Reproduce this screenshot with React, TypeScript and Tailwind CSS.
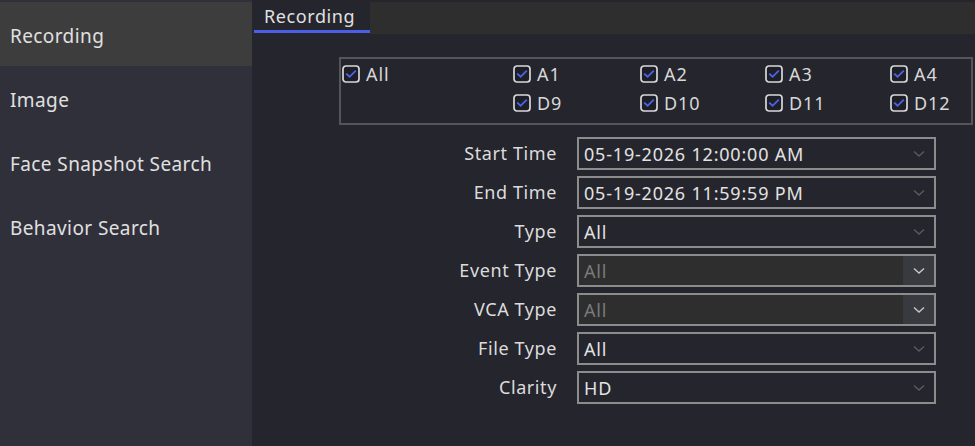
import React from "react";

const font = { fontFamily: '"Noto Sans", "Open Sans", sans-serif' };

function Check({ label }: { label: string }) {
  return (
    <div className="flex items-center gap-[6px] h-[18px] text-[18px] tracking-[0.9px] text-[#d8d8d8] leading-none">
      <svg width="18" height="18" viewBox="0 0 18 18">
        <rect x="1" y="1" width="16" height="16" rx="3" fill="#1e1e26" stroke="#d9d9d9" strokeWidth="1.7" />
        <path d="M4.2 8.6 L7.6 11.8 L13.8 5.6" fill="none" stroke="#4a63e8" strokeWidth="1.9" />
      </svg>
      <span>{label}</span>
    </div>
  );
}

function Chevron({ color }: { color: string }) {
  return (
    <svg width="12" height="8" viewBox="0 0 12 8">
      <path d="M1 1.5 L6 6 L11 1.5" fill="none" stroke={color} strokeWidth="1.4" />
    </svg>
  );
}

function Field({ label, value, disabled }: { label: string; value: string; disabled?: boolean }) {
  return (
    <div className="flex items-center h-[33px]">
      <div className="w-[325px] pr-[20px] text-right text-[18px] tracking-[0.6px] text-[#dcdcdc]">{label}</div>
      <div
        className={`flex items-center w-[359px] h-[33px] border-2 border-[#8c8c8c] ${
          disabled ? "bg-[#2e2e2e]" : "bg-[#25252d]"
        }`}
      >
        <div
          className={`flex-1 pl-[5px] pt-[1px] text-[18px] tracking-[0.8px] ${
            disabled ? "text-[#7a7a7a]" : "text-[#e2e2e2]"
          }`}
        >
          {value}
        </div>
        <div
          className={`flex items-center justify-center w-[31px] h-full ${disabled ? "bg-[#393940]" : ""}`}
        >
          <Chevron color={disabled ? "#c8c8c8" : "#5a5a62"} />
        </div>
      </div>
    </div>
  );
}

function NavItem({ label, active }: { label: string; active?: boolean }) {
  return (
    <div
      className={`h-[64px] flex items-center pl-[10px] pt-[4px] text-[19px] tracking-[0.4px] text-[#e0e0e0] ${
        active ? "bg-[#3d3d3d]" : ""
      }`}
    >
      {label}
    </div>
  );
}

export default function App() {
  return (
    <div className="w-[975px] h-[446px] flex bg-[#25252d] overflow-hidden" style={font}>
      <div className="w-[252px] h-full bg-[#30303a] pt-[2px] flex flex-col">
        <NavItem label="Recording" active />
        <NavItem label="Image" />
        <NavItem label="Face Snapshot Search" />
        <NavItem label="Behavior Search" />
      </div>
      <div className="flex-1 flex flex-col">
        <div className="h-[2px] bg-[#25252b]" />
        <div className="flex h-[32px]">
          <div className="w-[118px] flex flex-col">
            <div className="flex-1 pl-[12px] pt-[5px] text-[18px] leading-none text-[#e0e0e0] tracking-[0.6px]">
              Recording
            </div>
            <div className="h-[3px] mb-[1px] ml-[2px] bg-[#4a5fe6]" />
          </div>
          <div className="flex-1 bg-[#2e2e2f]" />
        </div>
        <div className="mt-[23px] ml-[87px] w-[634px] h-[68px] border-2 border-[#555559] flex items-start pt-[6px] pl-[1px]">
          <div className="w-[171px]">
            <Check label="All" />
          </div>
          <div className="grid grid-cols-[127px_125px_125px_80px] content-start gap-y-[11px]">
            <Check label="A1" />
            <Check label="A2" />
            <Check label="A3" />
            <Check label="A4" />
            <Check label="D9" />
            <Check label="D10" />
            <Check label="D11" />
            <Check label="D12" />
          </div>
        </div>
        <div className="mt-[12px] flex flex-col gap-[6px]">
          <Field label="Start Time" value="05-19-2026 12:00:00 AM" />
          <Field label="End Time" value="05-19-2026 11:59:59 PM" />
          <Field label="Type" value="All" />
          <Field label="Event Type" value="All" disabled />
          <Field label="VCA Type" value="All" disabled />
          <Field label="File Type" value="All" />
          <Field label="Clarity" value="HD" />
        </div>
      </div>
    </div>
  );
}
